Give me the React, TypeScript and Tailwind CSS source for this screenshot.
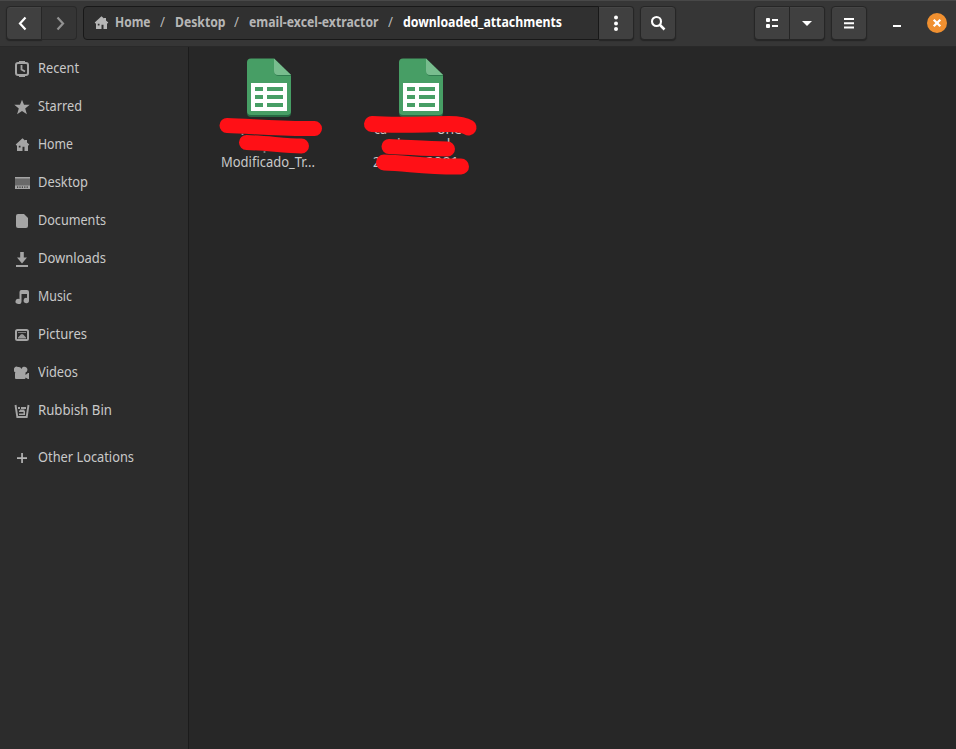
import { useLayoutEffect, useRef } from "react";
import type { ReactNode } from "react";

/** Single-line label narrowed or widened so that it fills `w` pixels. */
function Label({ text, w, className = "" }: { text: string; w: number; className?: string }) {
  const ref = useRef<HTMLSpanElement>(null);
  useLayoutEffect(() => {
    const el = ref.current;
    if (!el) return;
    el.style.transform = "none";
    el.style.transform = `scaleX(${w / el.getBoundingClientRect().width})`;
  }, [text, w]);
  return (
    <span className="block shrink-0" style={{ width: w }}>
      <span ref={ref} className={`inline-block origin-left whitespace-nowrap ${className}`}>{text}</span>
    </span>
  );
}

function Icon({ children, className = "" }: { children: ReactNode; className?: string }) {
  return (
    <svg viewBox="0 0 16 16" width="16" height="16" fill="currentColor" className={`shrink-0 ${className}`}>
      {children}
    </svg>
  );
}

const home = <path fillRule="evenodd" d="M8.500 1.200 1.700 7.600l.8.900h.5V14h5.500V9.800h2V14h3.500V8.500h.5l.8-.9-2.300-2.200V3H11v.5ZM4.800 8.700h1.700v1.700H4.800Z" />;

const places: { name: string; w: number; icon: ReactNode }[] = [
  {
    name: "Recent",
    w: 41,
    icon: (
      <>
        <rect x="2" y="2" width="12" height="12" rx="2" fill="none" stroke="currentColor" strokeWidth="2" />
        <path d="M5 0h6v2H5ZM5 14h6v2H5Z" />
        <path d="M7.500 4v4.500l3.500 2" fill="none" stroke="currentColor" strokeWidth="1.800" />
      </>
    ),
  },
  { name: "Starred", w: 44, icon: <path d="m8 .8 2 5h5.700l-4.500 3.600 1.700 5.900L8 12l-4.900 3.300 1.700-5.900L.3 5.800H6Z" /> },
  { name: "Home", w: 35, icon: home },
  {
    name: "Desktop",
    w: 50,
    icon: (
      <>
        <path d="M1 2h15v9H1Z" opacity=".5" />
        <path d="M1 2h15v1.500H1Z" />
        <path fillRule="evenodd" d="M1 10.500h15V14H1Zm2 1v1.200h1.200v-1.200Zm2.400 0v1.200h1.200v-1.200Zm2.400 0v1.200H9v-1.200Zm2.400 0v1.200h1.200v-1.200Zm2.400 0v1.200h1.200v-1.200Z" />
      </>
    ),
  },
  { name: "Documents", w: 68, icon: <path d="M4 1h6l4 4v8q0 2-2 2H4q-2 0-2-2V3q0-2 2-2Z" /> },
  { name: "Downloads", w: 68, icon: <path d="M6.200 1h3.600v5.500H13l-5 6-5-6h3.200ZM2 14h12v2H2Z" /> },
  { name: "Music", w: 34, icon: <path d="M5.500 3q0-2 2-2H13q2 0 2 2v8.500a2.700 2.700 0 1 1-2-2.600V5H7.500v7.500a3 2.600 0 1 1-2-2.500Z" /> },
  {
    name: "Pictures",
    w: 49,
    icon: (
      <>
        <rect x="2" y="3" width="12" height="10" rx="1.500" fill="none" stroke="currentColor" strokeWidth="2" />
        <path d="M4 11.500v-1L7 7.200h2l3 3.300v1ZM4 5h8v.8H4Z" opacity=".9" />
      </>
    ),
  },
  { name: "Videos", w: 40, icon: <path d="M4 2a3 3 0 0 1 3.500 2A3 3 0 1 1 11.500 7.500V10L14 8h1v6h-1l-2.500-1.500V13q0 1-1 1H2q-1 0-1-1V8.500q0-.5.500-1A3 3 0 0 1 4 2Z" /> },
  {
    name: "Rubbish Bin",
    w: 74,
    icon: (
      <>
        <path d="m1.500 2 1.800 12h9.400l1.800-12" fill="none" stroke="currentColor" strokeWidth="1.900" />
        <path d="M4 4h2v2H4ZM7 4h5v2H7ZM5 7.500h1v-1h4.500V8h.5v4H5v-1.500h4.500V9H5Z" />
      </>
    ),
  },
];

const btn = "flex items-center justify-center border border-[#262626] bg-[#404040] text-white shadow-[0_1px_1px_#252525,inset_0_1px_0_#464646]";

function Slash() {
  return <div className="mr-[10px] ml-[9px]"><Label text="/" w={5} className="font-normal" /></div>;
}

function Header() {
  return (
    <header className="flex h-[47px] shrink-0 items-start border-b border-[#292929] bg-[#363636] px-[6px] pt-[6px] shadow-[inset_0_1px_0_#484848]">
      <div className="flex h-[34px] w-[71px]">
        <button className={`${btn} w-9 rounded-l pr-[2px]`} aria-label="Back"><Icon><path d="M10.500 2.500 5 8.500l5.500 6" fill="none" stroke="currentColor" strokeWidth="2.200" /></Icon></button>
        <button className="flex w-[35px] items-center justify-center rounded-r border border-l-0 border-[#292929] bg-[#353535] text-[#929292]" aria-label="Forward"><Icon><path d="m6.500 2.500 5.500 6-5.500 6" fill="none" stroke="currentColor" strokeWidth="2.200" /></Icon></button>
      </div>
      <nav className="ml-[6px] flex h-[34px] w-[516px] items-center rounded-l border border-[#181818] bg-[#303030] pl-[9px] text-sm font-bold text-[#b6b6b6]">
        <Icon>{home}</Icon>
        <div className="-mt-[2px] ml-[6px] flex">
          <Label text="Home" w={35.500} />
          <Slash />
          <Label text="Desktop" w={50.500} />
          <Slash />
          <Label text="email-excel-extractor" w={129.500} />
          <Slash />
          <Label text="downloaded_attachments" w={159} className="text-white" />
        </div>
      </nav>
      <button className={`${btn} h-[34px] w-[35px] rounded-r border-l-0`} aria-label="Folder menu">
        <Icon><circle cx="8" cy="2.500" r="2" /><circle cx="8" cy="8.500" r="2" /><circle cx="8" cy="14" r="2" /></Icon>
      </button>
      <button className={`${btn} ml-[6px] h-[34px] w-9 rounded`} aria-label="Search">
        <Icon><circle cx="6.500" cy="6.500" r="4.500" fill="none" stroke="currentColor" strokeWidth="2.100" /><path d="m9.500 9.500 5 5" stroke="currentColor" strokeWidth="2.500" /></Icon>
      </button>
      <div className="ml-auto flex h-[34px]">
        <button className={`${btn} w-9 rounded-l`} aria-label="List view"><Icon><rect x="2" y="3" width="4" height="4" rx="1" /><rect x="2" y="9" width="4" height="4" rx="1" /><path d="M8 4h6v2H8ZM8 10h6v2H8Z" /></Icon></button>
        <button className={`${btn} w-[35px] rounded-r border-l-0`} aria-label="View options"><Icon><path d="M3 6h10l-5 5Z" /></Icon></button>
      </div>
      <button className={`${btn} ml-[6px] h-[34px] w-9 rounded`} aria-label="Menu"><Icon><path d="M3 3h10v2H3ZM3 7.300h10v2H3ZM3 11.600h10v2H3Z" /></Icon></button>
      <button className="mt-[19px] ml-[26px] h-0.5 w-2 bg-white" aria-label="Minimise" />
      <button className="mt-[7px] mr-[3px] ml-[26px] flex size-5 items-center justify-center rounded-full bg-[#f09030] text-white" aria-label="Close">
        <Icon><path d="m4.700 4.700 6.600 6.600M11.300 4.700l-6.600 6.600" stroke="currentColor" strokeWidth="2.300" /></Icon>
      </button>
    </header>
  );
}

function SheetIcon() {
  return (
    <svg viewBox="0 0 46 59" width="46" height="59" className="shrink-0">
      <path d="M5 2h24l16 16v37q0 4-4 4H5q-4 0-4-4V6q0-4 4-4Z" fill="#276943" />
      <path d="M5 .500h23l17 16.500v36q0 4-4 4H5q-4 0-4-4V4.500q0-4 4-4Z" fill="#479e65" />
      <path d="M28 1v12q0 5 5 5h12v-1L33 16Z" fill="#317d50" />
      <path d="M28 .500V13q0 4 4 4h13Z" fill="#78bd8e" />
      <path fillRule="evenodd" d="M5 25h36v28H5Zm4 4v4h8v-4Zm12 0v4h16v-4ZM9 37v4h8v-4Zm12 0v4h16v-4ZM9 45v4h8v-4Zm12 0v4h16v-4Z" fill="#fff" />
    </svg>
  );
}

export default function App() {
  return (
    <div className="flex h-[749px] w-[956px] flex-col overflow-hidden bg-[#272727] font-['Noto_Sans',sans-serif]">
      <Header />
      <div className="flex flex-1">
        <aside className="w-[189px] border-r border-[#1b1b1b] bg-[#2c2c2c] pt-[3px] text-sm text-[#c9c9c9]">
          {places.map((p) => (
            <div key={p.name} className="flex h-[38px] items-center pl-[14px]">
              <Icon className="text-[#a5a5a5]">{p.icon}</Icon>
              <div className="ml-2 pb-[3px]"><Label text={p.name} w={p.w} /></div>
            </div>
          ))}
          <div className="mt-[9px] flex h-[38px] items-center pl-[14px]">
            <Icon className="text-[#b5b5b5]"><path d="M7.200 3h1.700v4.200H13v1.700H8.900V13H7.200V8.900H3V7.200h4.200Z" /></Icon>
            <div className="ml-2 pb-[3px]"><Label text="Other Locations" w={96} /></div>
          </div>
        </aside>
        <main className="flex items-start gap-8 pt-[11px] pl-5 text-sm leading-[18px] text-[#c9c9c9]">
          <div className="relative flex w-[120px] flex-col items-center">
            <SheetIcon />
            <div className="mt-[36px] mr-0.5"><Label text="Modificado_Tr..." w={94} /></div>
            <svg viewBox="0 0 120 130" width="120" height="130" className="absolute top-0 left-0" fill="none" stroke="#ff1016" strokeWidth="15" strokeLinecap="round">
              <path d="M33 76.200h1M55 94h1" stroke="#c9c9c9" strokeWidth="1" />
              <path d="M18 67.500C42 68 65 71 105.500 70.500" />
              <path d="M37.500 84.500C58 85 76 88 92.500 88" />
            </svg>
          </div>
          <div className="relative flex w-[120px] flex-col items-center">
            <SheetIcon />
            <div className="mt-[3px] flex w-full justify-between pr-[19px] pl-[13px]"><Label text="ca" w={13} /><Label text="one" w={25} /></div>
            <div className="-mt-[3px] flex w-full pl-[36px]"><span>i</span><span className="ml-[46px]">l</span></div>
            <div className="flex w-full pl-[12px]"><Label text="2" w={7} /><div className="ml-[21px]"><Label text="2 0 2001" w={58} /></div></div>
            <svg viewBox="0 0 120 130" width="120" height="130" className="absolute top-0 left-0" fill="none" stroke="#ff1016" strokeWidth="16" strokeLinecap="round">
              <path d="M11 66C38 68 65 66 88 66Q102 66 107.500 69.500" />
              <path d="M28 88.500C46 89 64 91 86.500 91" strokeWidth="15" />
              <path d="M23 104.500C46 105 64 109 100 108.500" />
            </svg>
          </div>
        </main>
      </div>
    </div>
  );
}
